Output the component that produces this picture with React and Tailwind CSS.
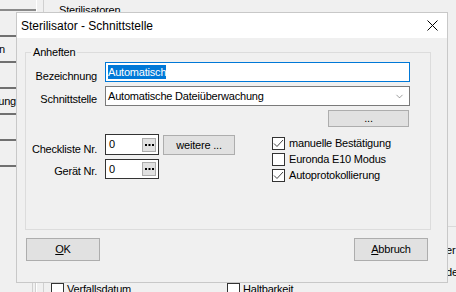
import { ChevronDown } from 'lucide-react'

function Dots() {
  return (
    <svg width="9" height="2" viewBox="0 0 9 2">
      <rect x="0" y="0" width="2" height="2" fill="#000" />
      <rect x="3.5" y="0" width="2" height="2" fill="#000" />
      <rect x="7" y="0" width="2" height="2" fill="#000" />
    </svg>
  )
}

function NumberField({ h }) {
  return (
    <div className={`w-[54px] ${h} border border-[#333] bg-white flex items-center justify-between pl-[3px] pr-[2px]`}>
      <span className="leading-[13px]">0</span>
      <div className="w-[14px] h-[14px] bg-[#e1e1e1] border border-[#adadad] flex items-center justify-center">
        <Dots />
      </div>
    </div>
  )
}

function Check({ label, checked }) {
  return (
    <div className="flex items-center h-[13px] gap-[4px]">
      <div className="w-[13px] h-[13px] border border-[#333] bg-white flex items-center justify-center">
        {checked && (
          <svg width="11" height="11" viewBox="0 0 11 11">
            <polyline points="1,5.5 4,8.5 10,2" fill="none" stroke="#444" strokeWidth="1" />
          </svg>
        )}
      </div>
      <span className="leading-[13px]">{label}</span>
    </div>
  )
}

function Button({ children, className = '' }) {
  return (
    <div className={`bg-[#e1e1e1] border border-[#adadad] flex items-center justify-center leading-[13px] ${className}`}>
      {children}
    </div>
  )
}

function NavItem({ text = '', pr = 'pr-[20px]' }) {
  return (
    <div className={`h-[26px] border-b-2 border-[#707070] flex items-center justify-end overflow-hidden whitespace-nowrap ${pr}`}>
      {text}
    </div>
  )
}

export default function App() {
  return (
    <div className="relative w-[456px] h-[292px] overflow-hidden bg-[#f0f0f0] font-['Liberation_Sans',Arial,sans-serif] text-[11px] tracking-[-0.2px] text-black">
      {/* Background window */}
      <div className="flex h-full">
        <div className="w-[37px] flex flex-col border-r border-white">
          <div className="h-[11px] border-b-2 border-[#8a8a8a]"></div>
          <NavItem />
          <NavItem text="Chargen" pr="pr-[31px]" />
          <NavItem />
          <NavItem text="Wartung" />
          <NavItem />
          <NavItem />
          <div className="flex-1 flex justify-end">
            <div className="w-[4px] border-l border-[#6a6a6a] border-r border-[#d0d0d0]"></div>
          </div>
        </div>
        <div className="w-[7px] border-r border-[#d0d0d0]"></div>
        <div className="flex-1 flex">
          <div className="flex-1 flex flex-col">
            <div className="pl-[15px] pt-[4px] leading-[13px]">Sterilisatoren</div>
            <div className="flex-1"></div>
            <div className="flex h-[9px] items-start">
              <div className="ml-[7px] w-[176px] flex items-start gap-[3px]">
                <div className="w-[13px] h-[13px] border border-[#333] bg-white"></div>
                <span className="leading-[13px]">Verfallsdatum</span>
              </div>
              <div className="flex items-start gap-[3px]">
                <div className="w-[13px] h-[13px] border border-[#333] bg-white"></div>
                <span className="leading-[13px]">Haltbarkeit</span>
              </div>
            </div>
          </div>
          <div className="w-[10px] flex flex-col">
            <div className="h-[226px]"></div>
            <div className="border-t border-[#d9d9d9] pt-[17px] leading-[13px] whitespace-nowrap overflow-hidden">er</div>
            <div className="pt-[9px] leading-[13px] whitespace-nowrap overflow-hidden">de</div>
          </div>
        </div>
      </div>

      {/* Dialog */}
      <div className="absolute left-[16px] top-[12px] w-[432px] h-[271px] border border-[#c8c8c8] bg-[#f0f0f0] flex flex-col">
        <div className="h-[25px] bg-white flex items-center justify-between pl-[4px] pr-[9px]">
          <span className="text-[12px] tracking-normal leading-[14px] pt-[1px]">Sterilisator - Schnittstelle</span>
          <svg width="11" height="11" viewBox="0 0 11 11">
            <path d="M0.5 0.5 L10.5 10.5 M10.5 0.5 L0.5 10.5" stroke="#000" strokeWidth="1" />
          </svg>
        </div>

        <fieldset className="ml-[8px] mt-[8px] w-[406px] h-[184px] border border-[#dcdcdc] p-0">
          <legend className="ml-[5px] px-[2px] leading-[13px]">Anheften</legend>

          <div className="mt-[3px] flex h-[20px]">
            <div className="w-[71px] text-right pt-[8px] leading-[13px]">Bezeichnung</div>
            <div className="ml-[8px] w-[305px] h-[20px] border border-[#0078d7] bg-white flex items-center pl-[2px]">
              <span className="bg-[#0078d7] text-white leading-[14px]">Automatisch</span>
            </div>
          </div>

          <div className="mt-[4px] flex h-[20px]">
            <div className="w-[71px] text-right pt-[7px] leading-[13px]">Schnittstelle</div>
            <div className="ml-[8px] w-[305px] h-[20px] border border-[#7a7a7a] bg-white flex items-center justify-between pl-[2px] pr-[4px]">
              <span className="leading-[13px]">Automatische Dateiüberwachung</span>
              <ChevronDown size={11} strokeWidth={1.25} color="#555" />
            </div>
          </div>

          <div className="mt-[4px] flex h-[17px]">
            <Button className="ml-[302px] w-[81px] h-[17px]">...</Button>
          </div>

          <div className="mt-[7px] flex">
            <div className="w-[246px] flex flex-col">
              <div className="flex h-[21px]">
                <div className="w-[71px] text-right pt-[9px] leading-[13px] whitespace-nowrap">Checkliste Nr.</div>
                <div className="ml-[8px]">
                  <NumberField h="h-[21px]" />
                </div>
                <Button className="ml-[4px] mt-[1px] w-[72px] h-[20px]">weitere ...</Button>
              </div>
              <div className="mt-[4px] flex h-[20px]">
                <div className="w-[71px] text-right pt-[6px] leading-[13px]">Gerät Nr.</div>
                <div className="ml-[8px]">
                  <NumberField h="h-[20px]" />
                </div>
              </div>
            </div>
            <div className="mt-[3px] flex flex-col gap-[3px]">
              <Check label="manuelle Bestätigung" checked />
              <Check label="Euronda E10 Modus" />
              <Check label="Autoprotokollierung" checked />
            </div>
          </div>
        </fieldset>

        <div className="mt-[8px] ml-[9px] mr-[19px] flex justify-between">
          <Button className="w-[74px] h-[23px]">
            <span><span className="underline">O</span>K</span>
          </Button>
          <Button className="w-[74px] h-[23px]">
            <span><span className="underline">A</span>bbruch</span>
          </Button>
        </div>
      </div>
    </div>
  )
}
